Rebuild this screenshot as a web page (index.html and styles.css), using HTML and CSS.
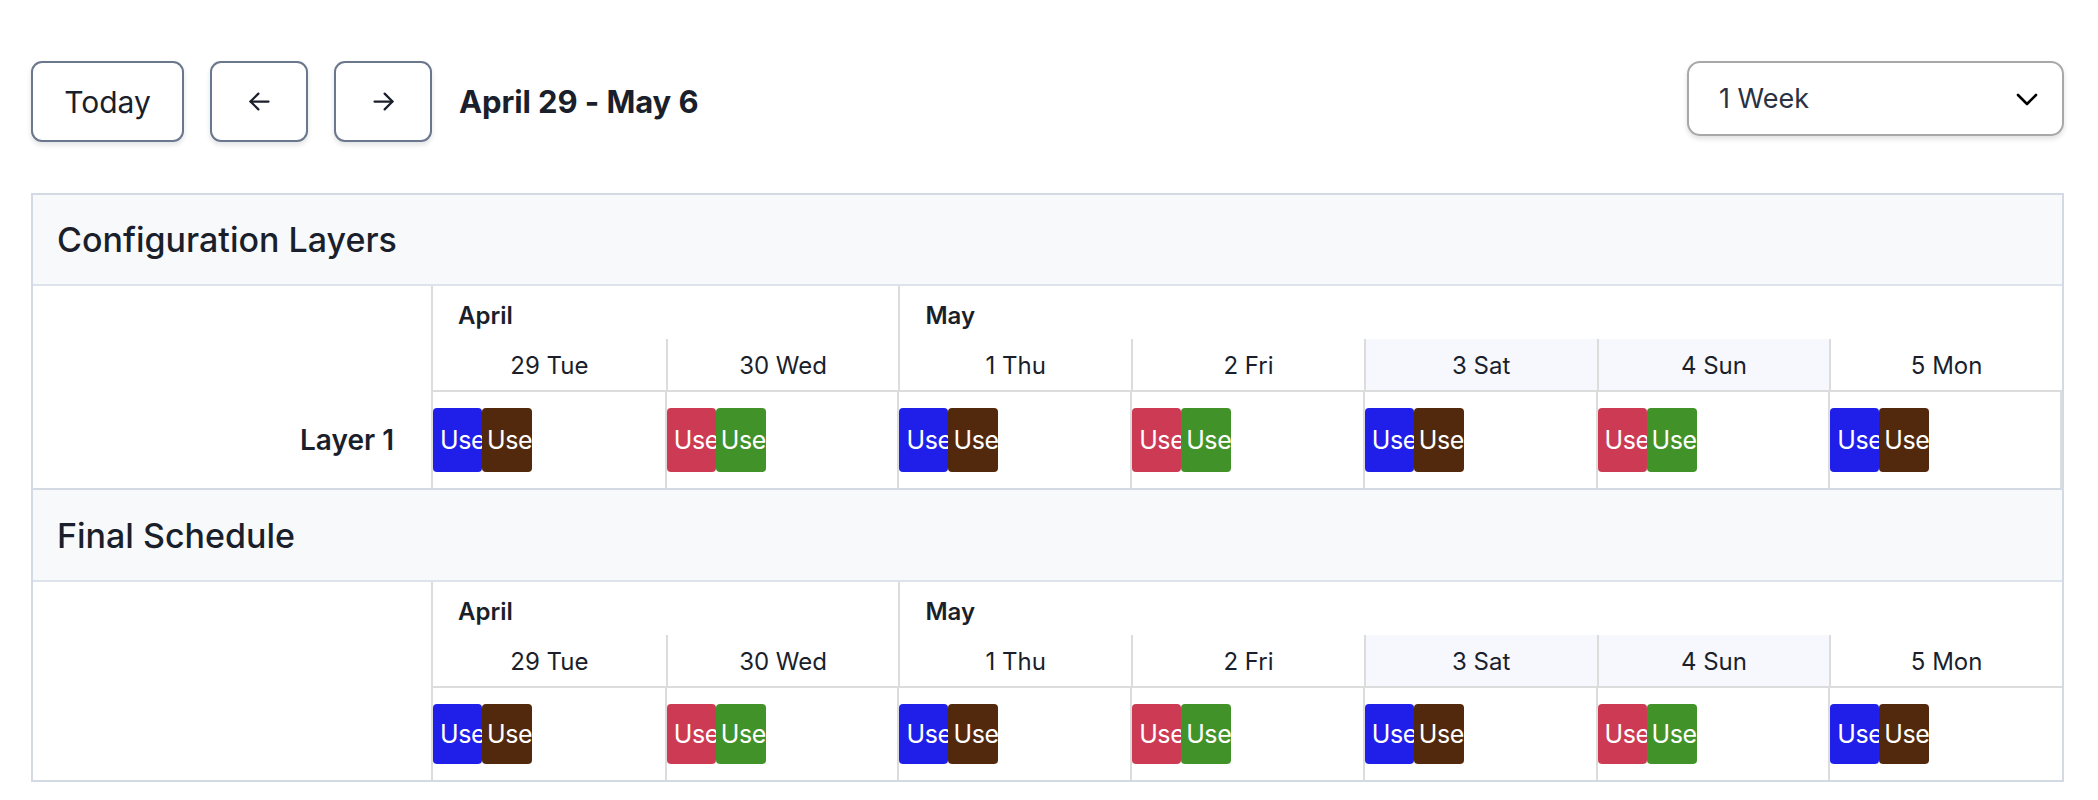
FILE: index.html
```html
<!DOCTYPE html>
<html>
<head>
<meta charset="utf-8">
<link rel="stylesheet" href="styles.css">
</head>
<body>
<div class="page">
  <div class="toolbar">
    <button class="btn btn-today">Today</button>
    <button class="btn btn-icon" aria-label="Previous">
      <svg width="24" height="24" viewBox="0 0 24 24" fill="none" stroke="#1a1f2b" stroke-width="2" stroke-linecap="round" stroke-linejoin="round"><path d="M20 12H4"/><path d="M11 19l-7-7 7-7"/></svg>
    </button>
    <button class="btn btn-icon" aria-label="Next">
      <svg width="24" height="24" viewBox="0 0 24 24" fill="none" stroke="#1a1f2b" stroke-width="2" stroke-linecap="round" stroke-linejoin="round"><path d="M4 12h16"/><path d="M13 5l7 7-7 7"/></svg>
    </button>
    <div class="range">April 29 - May 6</div>
    <div class="select">
      <span>1 Week</span>
      <svg width="26" height="16" viewBox="0 0 26 16" fill="none" stroke="#000" stroke-width="2.6" stroke-linecap="round" stroke-linejoin="round"><path d="M4 4l9 9 9-9"/></svg>
    </div>
  </div>

  <div class="table">
    <div class="section-head">Configuration Layers</div>
    <div class="grid config">
      <div class="label-spacer"></div>
      <div class="month april">April</div>
      <div class="month may">May</div>
      <div class="day first">29 Tue</div>
      <div class="day">30 Wed</div>
      <div class="day">1 Thu</div>
      <div class="day">2 Fri</div>
      <div class="day weekend">3 Sat</div>
      <div class="day weekend">4 Sun</div>
      <div class="day">5 Mon</div>
      <div class="label">Layer 1</div>
      <div class="cell first"><div class="ev blue">Use</div><div class="ev brown">Use</div></div>
      <div class="cell"><div class="ev red">Use</div><div class="ev green">Use</div></div>
      <div class="cell"><div class="ev blue">Use</div><div class="ev brown">Use</div></div>
      <div class="cell"><div class="ev red">Use</div><div class="ev green">Use</div></div>
      <div class="cell"><div class="ev blue">Use</div><div class="ev brown">Use</div></div>
      <div class="cell"><div class="ev red">Use</div><div class="ev green">Use</div></div>
      <div class="cell last"><div class="ev blue">Use</div><div class="ev brown">Use</div></div>
    </div>

    <div class="section-head bordered">Final Schedule</div>
    <div class="grid final">
      <div class="label-spacer"></div>
      <div class="month april">April</div>
      <div class="month may">May</div>
      <div class="day first">29 Tue</div>
      <div class="day">30 Wed</div>
      <div class="day">1 Thu</div>
      <div class="day">2 Fri</div>
      <div class="day weekend">3 Sat</div>
      <div class="day weekend">4 Sun</div>
      <div class="day">5 Mon</div>
      <div class="label"></div>
      <div class="cell first"><div class="ev blue">Use</div><div class="ev brown">Use</div></div>
      <div class="cell"><div class="ev red">Use</div><div class="ev green">Use</div></div>
      <div class="cell"><div class="ev blue">Use</div><div class="ev brown">Use</div></div>
      <div class="cell"><div class="ev red">Use</div><div class="ev green">Use</div></div>
      <div class="cell"><div class="ev blue">Use</div><div class="ev brown">Use</div></div>
      <div class="cell"><div class="ev red">Use</div><div class="ev green">Use</div></div>
      <div class="cell"><div class="ev blue">Use</div><div class="ev brown">Use</div></div>
    </div>
  </div>
</div>
</body>
</html>
```

FILE: styles.css
```css
* { box-sizing: border-box; }

body {
  margin: 0;
  background: #ffffff;
  font-family: Inter, "Noto Sans", "Liberation Sans", sans-serif;
  color: #1a1f2b;
}

.page {
  padding: 61px 34px 0 31px;
}

.toolbar {
  display: flex;
  align-items: flex-start;
}

.btn {
  height: 81px;
  background: #fff;
  border: 2px solid #6b778c;
  border-radius: 11px;
  box-shadow: 0 3px 5px rgba(15, 23, 42, 0.12);
  font-family: inherit;
  color: #1a1f2b;
  display: flex;
  align-items: center;
  justify-content: center;
  padding: 0;
}

.btn-today {
  width: 153px;
  font-size: 30px;
  font-weight: 400;
}

.btn-icon {
  width: 98px;
  margin-left: 26px;
}

.btn-icon svg {
  width: 27px;
  height: 27px;
}

.range {
  align-self: center;
  margin-left: 27px;
  font-size: 31px;
  font-weight: 700;
  letter-spacing: -0.1px;
}

.select {
  margin-left: auto;
  width: 377px;
  height: 75px;
  border: 2px solid #a8a8a8;
  border-radius: 13px;
  box-shadow: 0 3px 5px rgba(0, 0, 0, 0.12);
  display: flex;
  align-items: center;
  justify-content: space-between;
  padding: 0 22px 0 30px;
  font-size: 27px;
  color: #2a3142;
}

.table {
  margin-top: 51px;
  border: 2px solid #d3dae3;
}

.section-head {
  height: 91px;
  background: #f8f9fb;
  border-bottom: 2px solid #dde3ea;
  display: flex;
  align-items: center;
  padding-left: 24px;
  font-size: 34px;
  font-weight: 500;
  color: #1a1f2b;
}

.section-head.bordered {
  height: 94px;
  border-top: 2px solid #d3dae3;
}

.grid {
  display: grid;
  grid-template-columns: 400px repeat(7, 1fr);
  grid-template-rows: 53px 53px auto;
}

.label-spacer {
  grid-column: 1;
  grid-row: 1 / 3;
  border-right: 2px solid #dcdcdc;
}

.month {
  grid-row: 1;
  display: flex;
  align-items: center;
  padding-left: 25px;
  padding-top: 6px;
  font-size: 24px;
  font-weight: 600;
}

.month.april { grid-column: 2 / 4; }
.month.may { grid-column: 4 / 9; border-left: 2px solid #dcdcdc; }

.day {
  grid-row: 2;
  display: flex;
  align-items: center;
  justify-content: center;
  padding-top: 2px;
  font-size: 24px;
  font-weight: 400;
  border-left: 2px solid #dcdcdc;
  border-bottom: 2px solid #dcdcdc;
}

.day.first { border-left: none; }
.day.weekend { background: #f7f8fe; }

.label {
  grid-column: 1;
  grid-row: 3;
  border-right: 2px solid #dcdcdc;
  display: flex;
  align-items: center;
  justify-content: flex-end;
  padding-right: 37px;
  font-size: 28px;
  font-weight: 600;
}

.cell {
  grid-row: 3;
  height: 96px;
  display: flex;
  align-items: flex-start;
  padding-top: 16px;
  border-left: 2px solid #dcdcdc;
  margin-left: -1px;
}

.final .cell {
  height: 92px;
  padding-top: 16px;
}

.cell.first { border-left: none; margin-left: 0; }
.cell.last { border-right: 2px solid #dcdcdc; }

.ev {
  width: 49px;
  height: 64px;
  border-radius: 4px;
  overflow: hidden;
  white-space: nowrap;
  color: #ffffff;
  font-size: 25px;
  display: flex;
  align-items: center;
  padding-left: 7px;
  letter-spacing: -0.4px;
}

.ev + .ev {
  width: 50px;
  padding-left: 5px;
}

.final .ev {
  height: 60px;
}

.blue { background: #1f1fe9; }
.brown { background: #52290d; }
.red { background: #cc3b53; }
.green { background: #42922a; }
```
